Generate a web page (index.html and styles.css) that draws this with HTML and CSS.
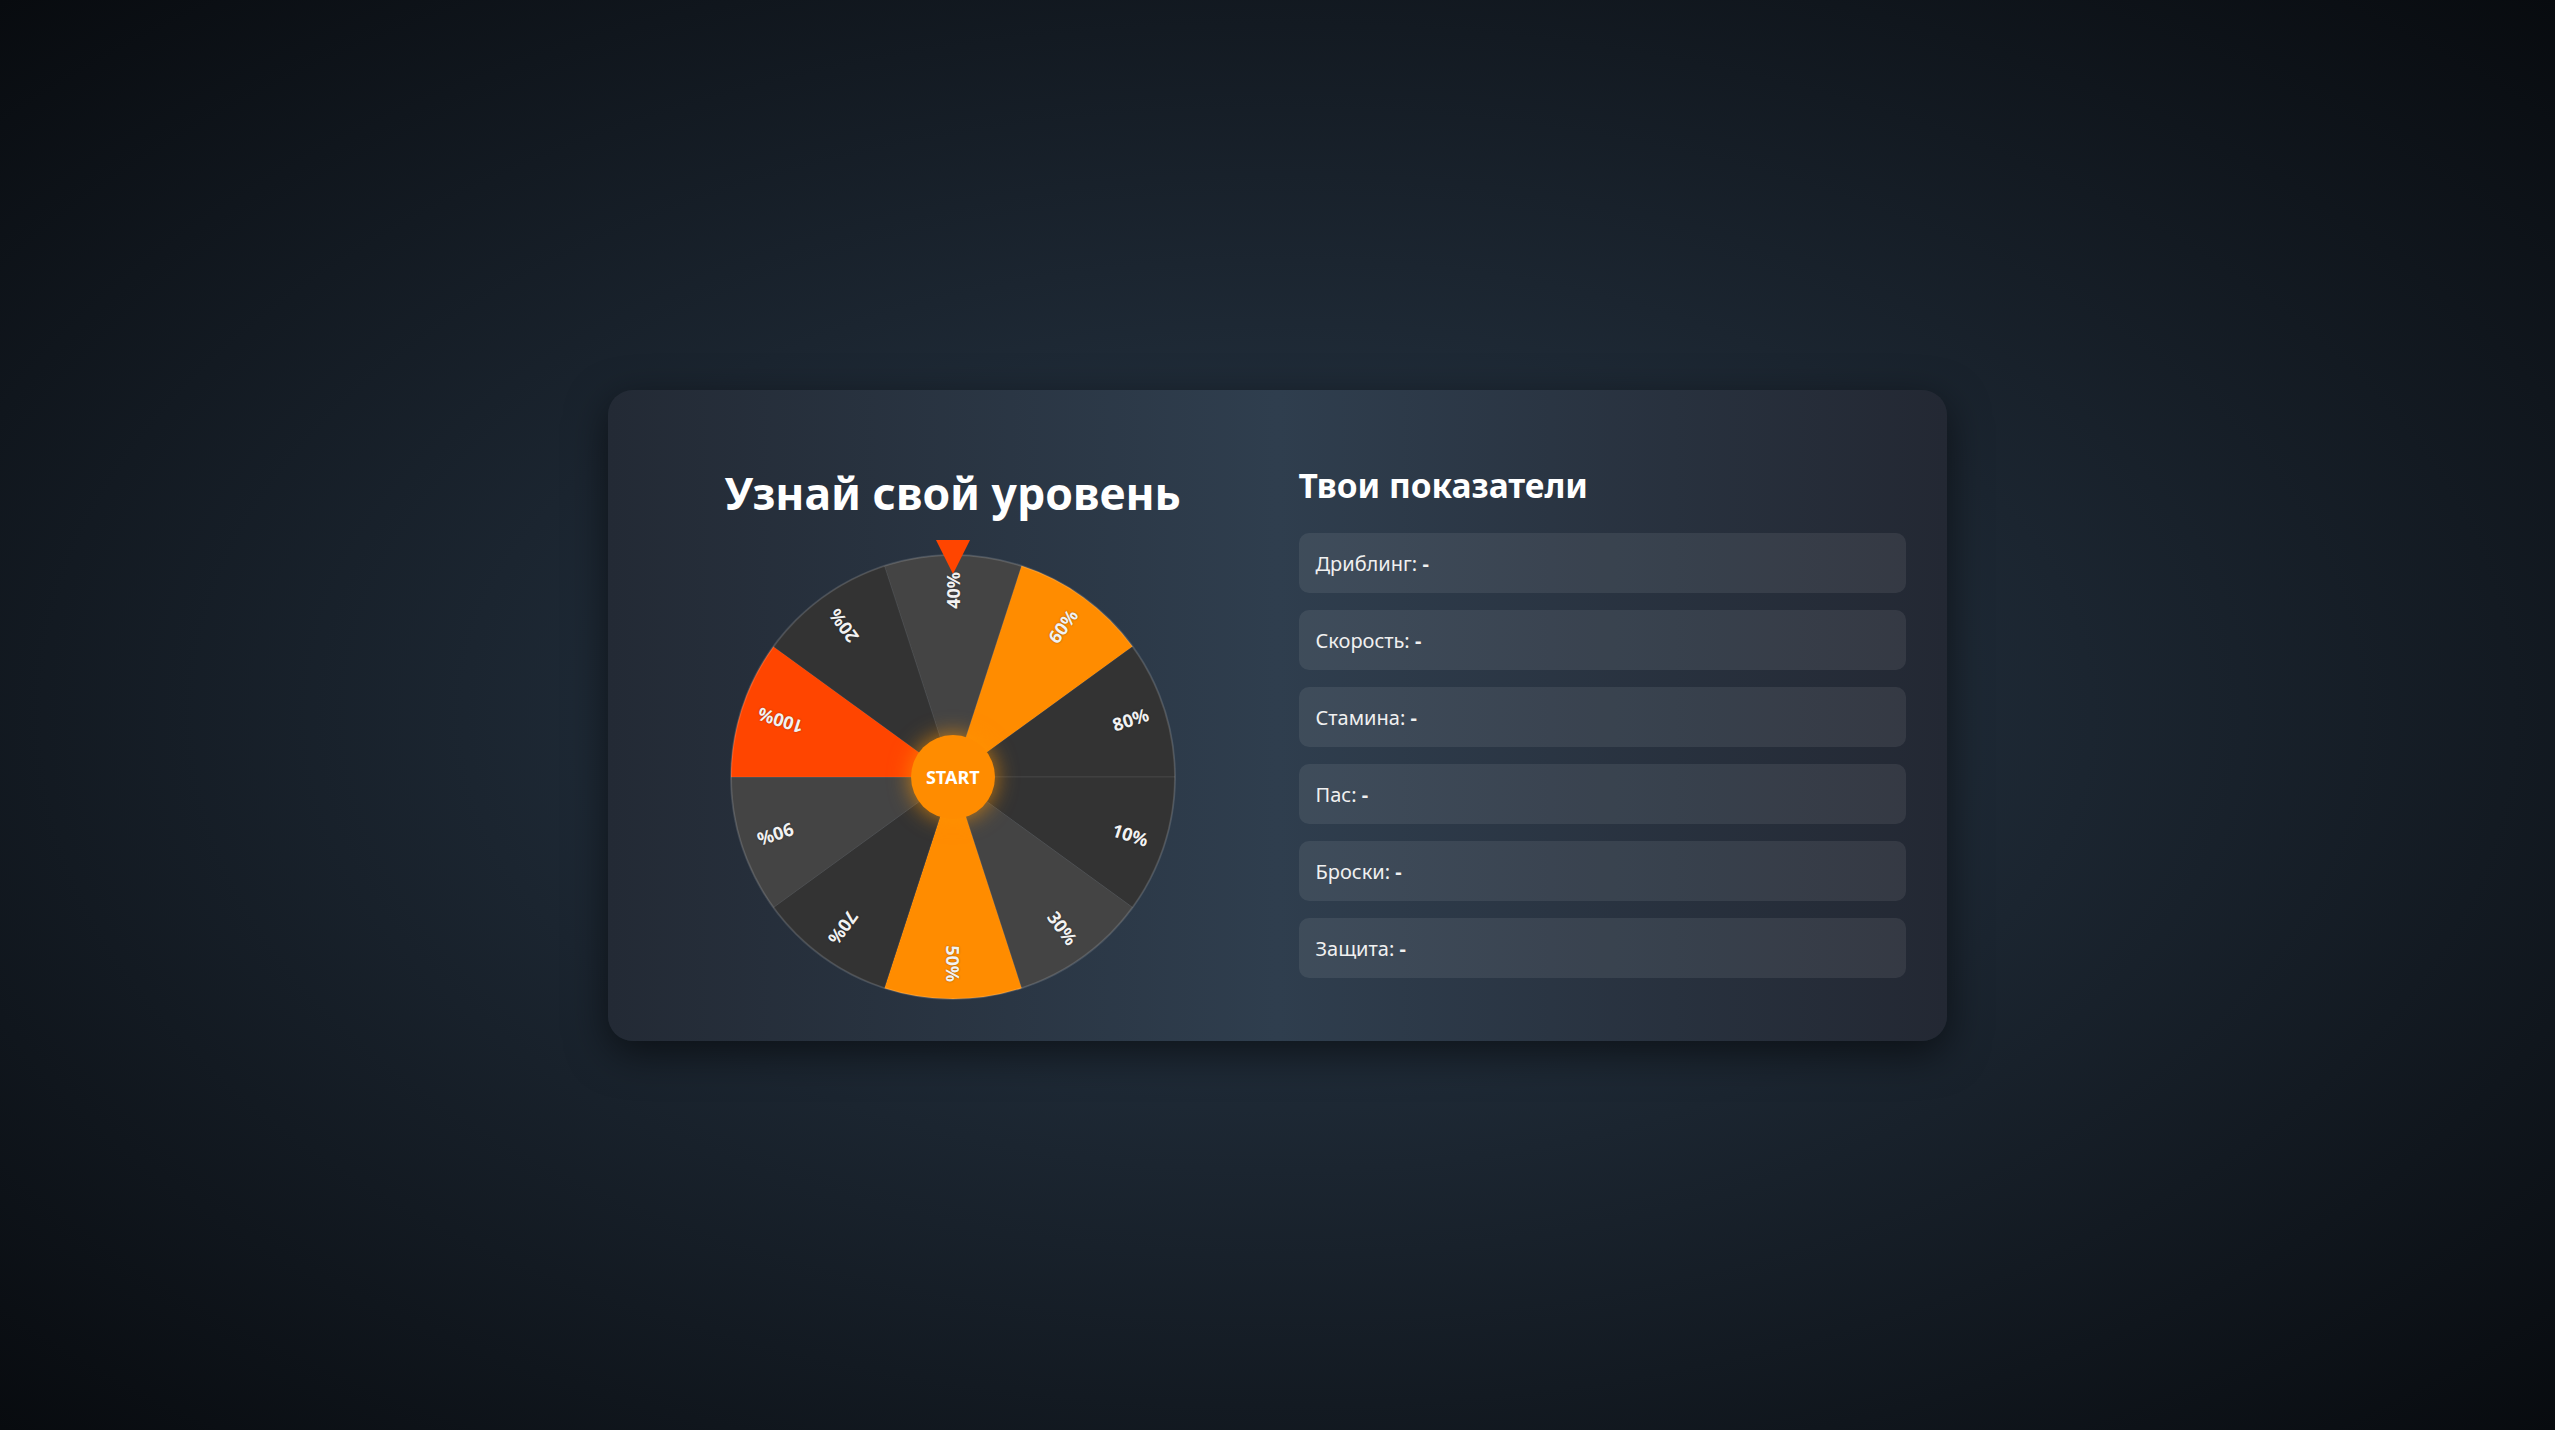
FILE: index.html
```html
<!DOCTYPE html>
<html lang="ru">
<head>
<meta charset="utf-8">
<title>Узнай свой уровень</title>
<link rel="stylesheet" href="styles.css">
</head>
<body>
<main class="card">
  <section class="wheel-col">
    <h1 class="wheel-title">Узнай свой уровень</h1>
    <div class="wheel-wrap">
      <div class="pointer"></div>
      <svg class="wheel" viewBox="-223 -223 446 446" width="446" height="446">
        <g class="segments">
          <path class="seg-mid" d="M0 0 L-68.60 -211.13 A222 222 0 0 1 68.60 -211.13 Z"/>
          <path class="seg-orange" d="M0 0 L68.60 -211.13 A222 222 0 0 1 179.60 -130.49 Z"/>
          <path class="seg-dark" d="M0 0 L179.60 -130.49 A222 222 0 0 1 222 0 Z"/>
          <path class="seg-dark" d="M0 0 L222 0 A222 222 0 0 1 179.60 130.49 Z"/>
          <path class="seg-mid" d="M0 0 L179.60 130.49 A222 222 0 0 1 68.60 211.13 Z"/>
          <path class="seg-orange" d="M0 0 L68.60 211.13 A222 222 0 0 1 -68.60 211.13 Z"/>
          <path class="seg-dark" d="M0 0 L-68.60 211.13 A222 222 0 0 1 -179.60 130.49 Z"/>
          <path class="seg-mid" d="M0 0 L-179.60 130.49 A222 222 0 0 1 -222 0 Z"/>
          <path class="seg-red" d="M0 0 L-222 0 A222 222 0 0 1 -179.60 -130.49 Z"/>
          <path class="seg-dark" d="M0 0 L-179.60 -130.49 A222 222 0 0 1 -68.60 -211.13 Z"/>
        </g>
        <circle class="rim" cx="0" cy="0" r="222"/>
        <g class="labels">
          <text transform="rotate(-90)" x="205" y="0">40%</text>
          <text transform="rotate(-54)" x="205" y="0">60%</text>
          <text transform="rotate(-18)" x="205" y="0">80%</text>
          <text transform="rotate(18)" x="205" y="0">10%</text>
          <text transform="rotate(54)" x="205" y="0">30%</text>
          <text transform="rotate(90)" x="205" y="0">50%</text>
          <text transform="rotate(126)" x="205" y="0">70%</text>
          <text transform="rotate(162)" x="205" y="0">90%</text>
          <text transform="rotate(198)" x="205" y="0">100%</text>
          <text transform="rotate(234)" x="205" y="0">20%</text>
        </g>
      </svg>
      <button class="start" type="button">START</button>
    </div>
  </section>
  <section class="stats-col">
    <h2 class="stats-title">Твои показатели</h2>
    <ul class="stats">
      <li class="stat">Дриблинг: <strong>-</strong></li>
      <li class="stat">Скорость: <strong>-</strong></li>
      <li class="stat">Стамина: <strong>-</strong></li>
      <li class="stat">Пас: <strong>-</strong></li>
      <li class="stat">Броски: <strong>-</strong></li>
      <li class="stat">Защита: <strong>-</strong></li>
    </ul>
  </section>
</main>
</body>
</html>
```

FILE: styles.css
```css
* { box-sizing: border-box; }

html, body {
  margin: 0;
  height: 100%;
}

body {
  font-family: "Noto Sans", "Open Sans", "DejaVu Sans", sans-serif;
  color: #fff;
  background: radial-gradient(ellipse at 50% 50%, #2a3b4c 0%, #1b2530 45%, #080b0f 100%);
  display: flex;
  align-items: center;
  justify-content: center;
}

.card {
  width: 1339px;
  padding: 41px;
  border-radius: 25px;
  background: linear-gradient(90deg, #232a35 0%, #2f3e4e 50%, #232833 100%);
  box-shadow: 0 12px 40px rgba(0, 0, 0, 0.55);
  display: grid;
  grid-template-columns: 1fr 1fr;
  column-gap: 42px;
}

.wheel-col {
  display: flex;
  flex-direction: column;
  align-items: center;
}

.wheel-title {
  margin: 31px 0 31px;
  font-size: 44.5px;
  font-weight: 700;
  line-height: normal;
  color: #fff;
}

.wheel-wrap {
  position: relative;
  width: 446px;
  height: 446px;
}

.wheel {
  display: block;
}

.seg-dark { fill: #333333; }
.seg-mid { fill: #444444; }
.seg-orange { fill: #ff8c00; }
.seg-red { fill: #ff4500; }

.segments path {
  stroke: rgba(255, 255, 255, 0.07);
  stroke-width: 1;
}

.rim {
  fill: none;
  stroke: rgba(255, 255, 255, 0.12);
  stroke-width: 2;
}

.labels text {
  fill: #f2f2f2;
  font-family: "Noto Sans", "Open Sans", sans-serif;
  font-size: 18px;
  font-weight: 700;
  text-anchor: end;
  dominant-baseline: central;
  text-shadow: 0 0 2px rgba(0, 0, 0, 0.4);
}

.pointer {
  position: absolute;
  top: -14px;
  left: 50%;
  transform: translateX(-50%);
  width: 0;
  height: 0;
  border-left: 17px solid transparent;
  border-right: 17px solid transparent;
  border-top: 34px solid #ff4500;
  z-index: 2;
}

.start {
  position: absolute;
  top: 50%;
  left: 50%;
  width: 84px;
  height: 84px;
  margin: -42px 0 0 -42px;
  border: none;
  border-radius: 50%;
  background: #ff8c00;
  color: #fff;
  font-family: "Noto Sans", "Open Sans", sans-serif;
  font-size: 18px;
  font-weight: 700;
  box-shadow: 0 0 22px rgba(255, 150, 0, 0.75);
  padding: 0;
  cursor: pointer;
}

.stats-col {
  display: flex;
  flex-direction: column;
}

.stats-title {
  margin: 31px 0 25.5px;
  font-size: 33.5px;
  font-weight: 700;
  line-height: normal;
  color: #fff;
}

.stats {
  list-style: none;
  margin: 0;
  padding: 0;
  display: flex;
  flex-direction: column;
  gap: 17px;
}

.stat {
  height: 60px;
  padding: 0 17px;
  display: flex;
  align-items: center;
  border-radius: 10px;
  background: rgba(255, 255, 255, 0.08);
  font-size: 20px;
  color: #f0f0f0;
  white-space: pre;
}

.stat strong {
  font-weight: 700;
}
```
